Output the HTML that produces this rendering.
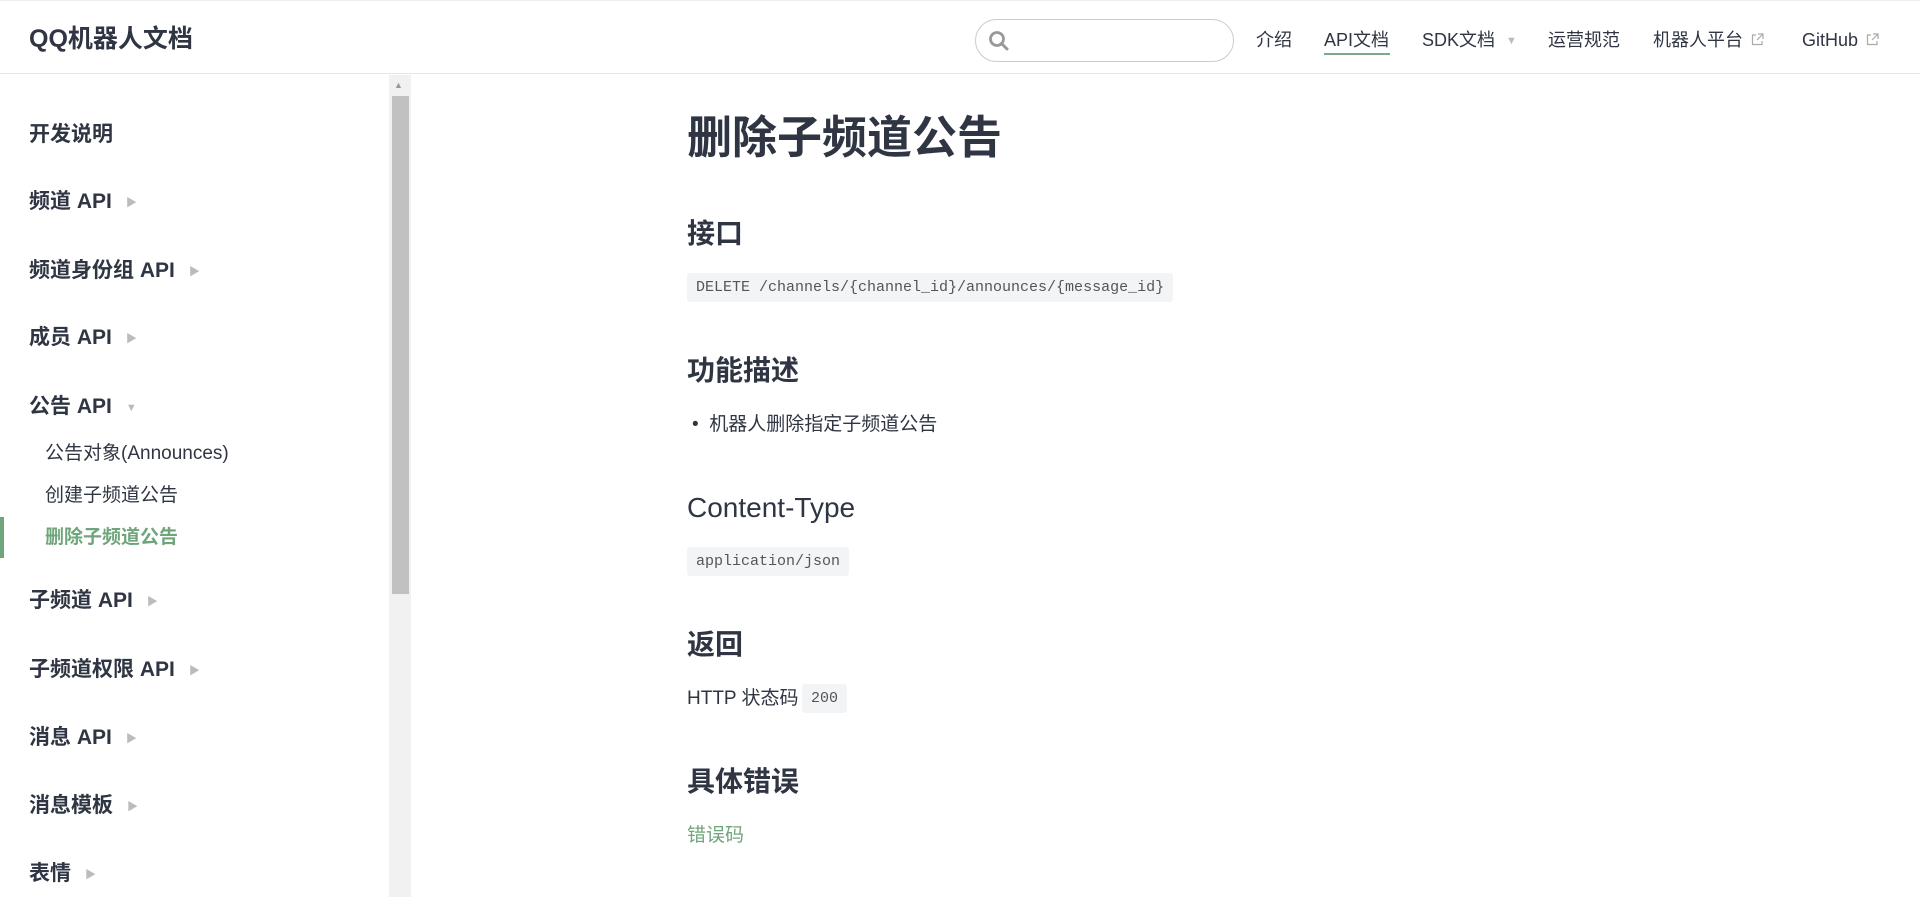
<!DOCTYPE html>
<html><head><meta charset="utf-8"><style>
*{margin:0;padding:0;box-sizing:border-box}
body{width:1920px;height:897px;overflow:hidden;background:#fff;font-family:"Liberation Sans","Noto Sans CJK SC",sans-serif;color:#2f3542;position:relative}
.a{position:absolute;white-space:nowrap;line-height:1}
header{position:absolute;left:0;top:0;width:1920px;height:74px;border-bottom:1px solid #e6e6e6;border-top:1px solid #eee}
.logo{left:29px;top:26px;font-size:25px;font-weight:bold;color:#2f3542}
.search{left:975px;top:18px;width:259px;height:43px;border:1.5px solid #ccc;border-radius:22px}
.nav{font-size:18px;top:30px;color:#2f3542}
.tri{color:#bbb;font-size:11px;top:35px}
.side{font-size:21px;font-weight:bold;color:#2f3542;left:29px}
.arr{color:#bbb;font-size:11px;margin-left:14px;vertical-align:2px}
.sub{font-size:19px;left:45px;color:#2f3542}
.h2{font-size:28px;font-weight:bold;left:687px;color:#2f3542}
.code{font-family:"Liberation Mono",monospace;font-size:15px;background:#f3f4f5;color:#555;border-radius:3px;padding:7px 9px}
.p{font-size:19px;color:#2f3542}
.ext{display:inline-block;margin-left:8px;vertical-align:0}
</style></head><body>
<header>
<div class="a logo">QQ机器人文档</div>
<div class="a search"><svg style="position:absolute;left:12px;top:10px" width="22" height="22" viewBox="0 0 22 22"><circle cx="9" cy="9" r="6.5" fill="none" stroke="#999" stroke-width="2.8"/><line x1="13.5" y1="13.5" x2="19" y2="19" stroke="#999" stroke-width="3" stroke-linecap="round"/></svg></div>
<div class="a nav" style="left:1256px">介绍</div>
<div class="a nav" style="left:1324px">API文档</div>
<div class="a" style="left:1324px;top:52px;width:66px;height:2px;background:#7bab86"></div>
<div class="a nav" style="left:1422px">SDK文档</div>
<div class="a tri" style="left:1506px">▼</div>
<div class="a nav" style="left:1548px">运营规范</div>
<div class="a nav" style="left:1653px">机器人平台<svg class="ext" width="13" height="13" viewBox="0 0 13 13"><path d="M5 2H1.5v9.5H11V8" fill="none" stroke="#aaa" stroke-width="1.2"/><path d="M7 1h5v5M12 1L6 7" fill="none" stroke="#aaa" stroke-width="1.2"/></svg></div>
<div class="a nav" style="left:1802px">GitHub<svg class="ext" width="13" height="13" viewBox="0 0 13 13"><path d="M5 2H1.5v9.5H11V8" fill="none" stroke="#aaa" stroke-width="1.2"/><path d="M7 1h5v5M12 1L6 7" fill="none" stroke="#aaa" stroke-width="1.2"/></svg></div>
</header>
<div class="a" style="left:389px;top:75px;width:22px;height:822px;background:#f1f1f1"></div>
<div class="a" style="left:392px;top:96px;width:17px;height:498px;background:#c1c1c1"></div>
<div class="a" style="left:394px;top:81px;color:#999;font-size:9px">▲</div>
<div class="a side" style="top:124px">开发说明</div>
<div class="a side" style="top:191px">频道 API<span class="arr">▶</span></div>
<div class="a side" style="top:260px">频道身份组 API<span class="arr">▶</span></div>
<div class="a side" style="top:327px">成员 API<span class="arr">▶</span></div>
<div class="a side" style="top:396px">公告 API<span class="arr">▼</span></div>
<div class="a sub" style="top:444px">公告对象(Announces)</div>
<div class="a sub" style="top:486px">创建子频道公告</div>
<div class="a" style="left:0;top:517px;width:4px;height:41px;background:#6fa57b"></div>
<div class="a sub" style="top:528px;color:#6fa57b;font-weight:bold">删除子频道公告</div>
<div class="a side" style="top:590px">子频道 API<span class="arr">▶</span></div>
<div class="a side" style="top:659px">子频道权限 API<span class="arr">▶</span></div>
<div class="a side" style="top:727px">消息 API<span class="arr">▶</span></div>
<div class="a side" style="top:795px">消息模板<span class="arr">▶</span></div>
<div class="a side" style="top:863px">表情<span class="arr">▶</span></div>

<div class="a" style="left:687px;top:115px;font-size:45px;font-weight:bold;color:#2f3542">删除子频道公告</div>
<div class="a h2" style="top:220px">接口</div>
<div class="a code" style="left:687px;top:273px">DELETE /channels/{channel_id}/announces/{message_id}</div>
<div class="a h2" style="top:357px">功能描述</div>
<div class="a p" style="left:692px;top:415px">•&nbsp; 机器人删除指定子频道公告</div>
<div class="a" style="left:687px;top:494px;font-size:28px;color:#2f3542">Content-Type</div>
<div class="a code" style="left:687px;top:547px">application/json</div>
<div class="a h2" style="top:631px">返回</div>
<div class="a p" style="left:687px;top:689px">HTTP 状态码</div>
<div class="a code" style="left:802px;top:684px">200</div>
<div class="a h2" style="top:768px">具体错误</div>
<div class="a p" style="left:687px;top:826px;color:#6fa57b">错误码</div>
</body></html>
